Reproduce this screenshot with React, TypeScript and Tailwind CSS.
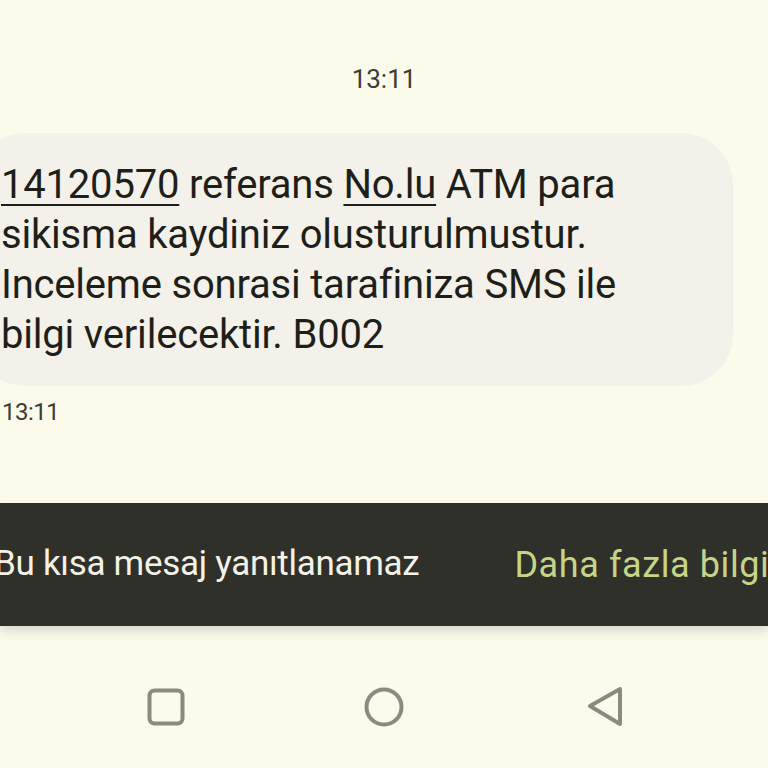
export default function App() {
  return (
    <div
      className="w-[768px] h-[768px] overflow-hidden bg-[#fcfaeb] flex flex-col text-[#1f1f1a]"
      style={{ fontFamily: "Roboto, 'Noto Sans', sans-serif" }}
    >
      {/* date/time header */}
      <div className="h-[133px] flex justify-center pt-[62px]">
        <span className="text-[26px] leading-[34px] text-[#3c3b34]">13:11</span>
      </div>

      {/* message bubble */}
      <div className="ml-[-26px] w-[759px] rounded-[52px] bg-[#f3f1e9] pl-[27px] pt-[27px] pb-[26px]">
        <p className="text-[40px] leading-[50px] tracking-[-0.2px]">
          <span className="underline decoration-[2px] underline-offset-[6px]">14120570</span> referans{" "}
          <span className="underline decoration-[2px] underline-offset-[6px]">No.lu</span> ATM para
          <br />
          sikisma kaydiniz olusturulmustur.
          <br />
          Inceleme sonrasi tarafiniza SMS ile
          <br />
          bilgi verilecektir. B002
        </p>
      </div>
      <div className="pl-[2px] pt-[10px] text-[24px] leading-[32px] text-[#3c3b34] tracking-[-0.5px]">13:11</div>

      {/* reply notice bar */}
      <div className="mt-[75px] h-[123px] bg-[#30302a] flex items-center whitespace-nowrap shadow-[0_6px_10px_rgba(0,0,0,0.12)]">
        <span className="ml-[-6px] text-[35px] text-[#f4f2e8] tracking-[-0.3px]">Bu kısa mesaj yanıtlanamaz</span>
        <span className="ml-[95px] text-[36px] text-[#c6d488] tracking-[0.6px]">Daha fazla bilgi</span>
      </div>

      {/* navigation bar */}
      <div className="flex-1 flex items-center justify-between pl-[147px] pr-[145px] pt-[20px]">
        <svg width="38" height="38" viewBox="0 0 38 38" fill="none">
          <rect x="2.5" y="2.5" width="33" height="33" rx="5" stroke="#8c8a7e" strokeWidth="4" />
        </svg>
        <svg width="40" height="40" viewBox="0 0 40 40" fill="none" className="ml-[-4px]">
          <circle cx="20" cy="20" r="17.5" stroke="#8c8a7e" strokeWidth="4" />
        </svg>
        <svg width="36" height="42" viewBox="0 0 36 42" fill="none">
          <path d="M33 3 L3 20 L33 38 Z" stroke="#8c8a7e" strokeWidth="4" strokeLinejoin="round" />
        </svg>
      </div>
    </div>
  );
}
